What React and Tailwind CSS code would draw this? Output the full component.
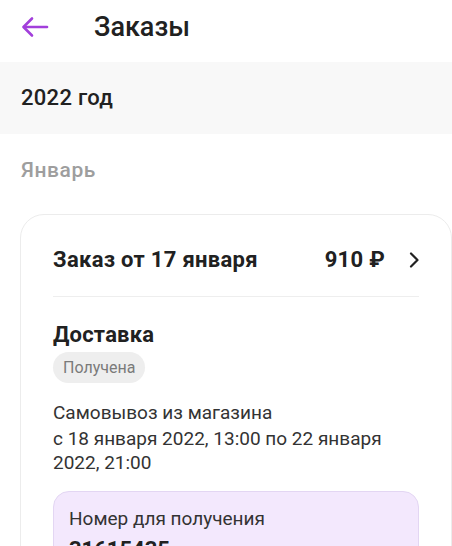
export default function App() {
  return (
    <div className="w-[452px] h-[546px] overflow-hidden bg-white text-[#212121]" style={{ fontFamily: "Roboto, 'Noto Sans', sans-serif" }}>
      <div className="h-[62px] flex items-start pt-[11px]">
        <div className="w-[94px] h-[32px] flex items-center pl-[21px]">
          <svg width="28" height="22" viewBox="0 0 28 22" fill="none" stroke="#a23fdb" strokeWidth="2.6" strokeLinecap="round" strokeLinejoin="round">
            <path d="M26 11H3" />
            <path d="M11 2.5L2.5 11L11 19.5" />
          </svg>
        </div>
        <div className="text-[27px] leading-[32px] font-medium">Заказы</div>
      </div>
      <div className="h-[72px] bg-[#f8f8f8] flex items-center pl-[21px]">
        <span className="text-[22px] leading-[26px] font-medium tracking-[0.3px]">2022 год</span>
      </div>
      <div className="pt-[24px] pl-[21px] text-[21px] leading-[25px] font-medium tracking-[0.6px] text-[#9e9e9e]">Январь</div>
      <div className="mt-[31px] ml-[20px] w-[432px] rounded-[24px] border border-[#ececec] px-8 pt-[33px] pb-8">
        <div className="flex items-center h-[24px]">
          <span className="text-[22px] leading-[24px] font-bold tracking-[0.3px] flex-1">Заказ от 17 января</span>
          <span className="text-[22px] leading-[24px] font-bold tracking-[0.3px]">910 ₽</span>
          <svg className="ml-[24px]" width="10" height="16" viewBox="0 0 10 16" fill="none" stroke="#212121" strokeWidth="2.2" strokeLinecap="round" strokeLinejoin="round">
            <path d="M2 1.5L8.5 8L2 14.5" />
          </svg>
        </div>
        <div className="mt-[24px] h-px bg-[#eeeeee]" />
        <div className="mt-[24px] text-[22px] leading-[27px] font-bold tracking-[0.2px]">Доставка</div>
        <div className="mt-[4px] inline-flex items-center h-[31px] px-[10px] rounded-full bg-[#eeeeee] text-[16px] text-[#7a7a7a]">Получена</div>
        <div className="mt-[18px] text-[19px] leading-[24px] text-[#333333]">Самовывоз из магазина</div>
        <div className="mt-[2px] text-[19px] leading-[24px] text-[#333333]">с 18 января 2022, 13:00 по 22 января 2022, 21:00</div>
        <div className="mt-[16px] rounded-[16px] bg-[#f3e8fd] border border-[#e3d6f3] px-[15px] pt-[15px] pb-4">
          <div className="text-[19px] leading-[24px] text-[#333333]">Номер для получения</div>
          <div className="mt-[6px] text-[22px] leading-[26px] font-bold">31615435</div>
        </div>
      </div>
    </div>
  );
}
